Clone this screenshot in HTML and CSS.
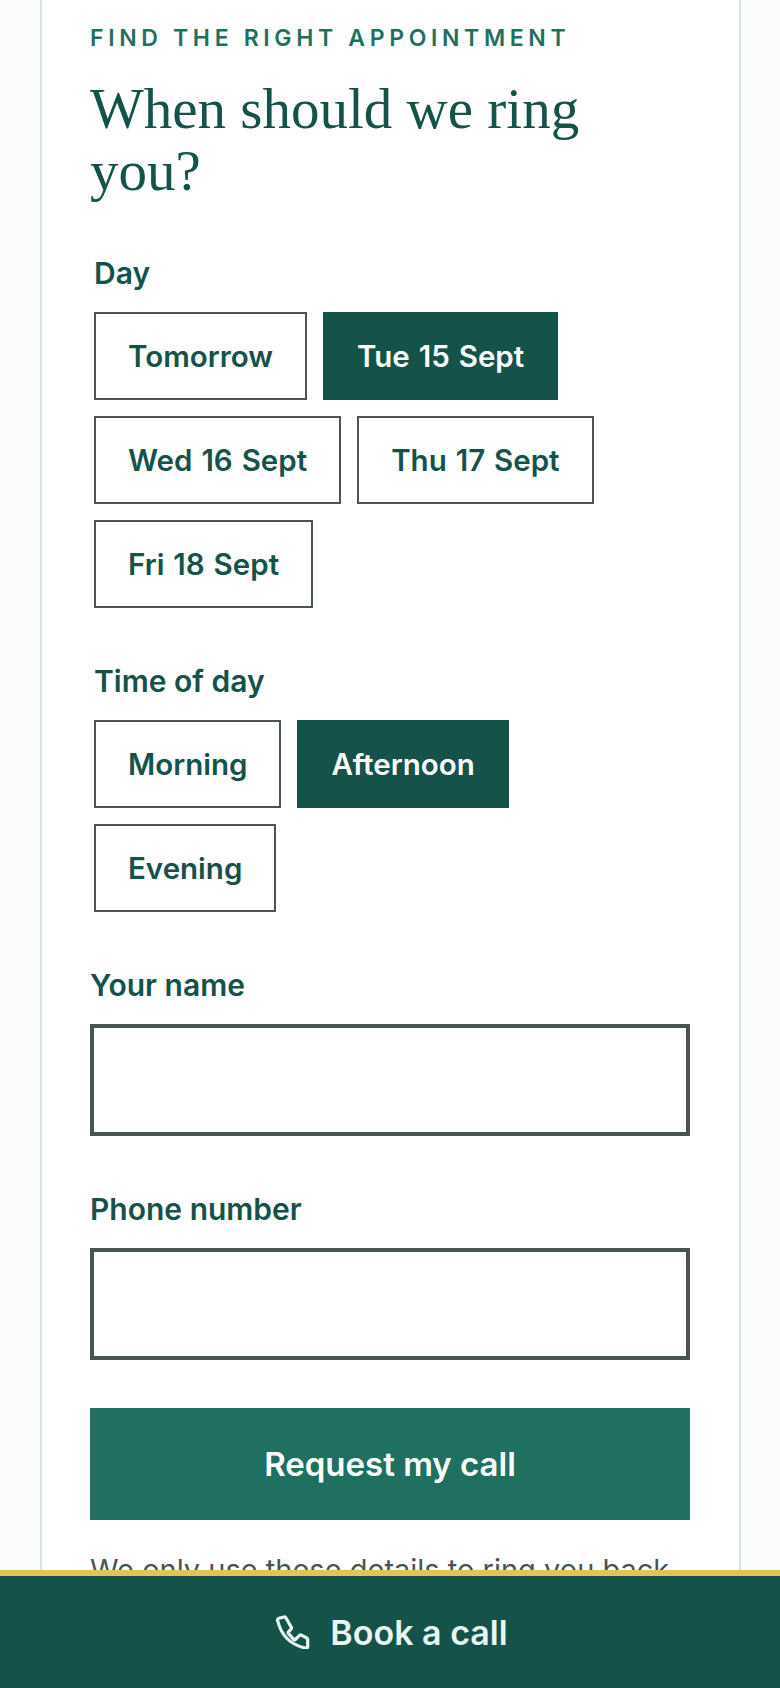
FILE: index.html
```html
<!DOCTYPE html>
<html lang="en">
<head>
    <meta charset="UTF-8">
    <meta name="viewport" content="width=device-width, initial-scale=1.0">
    <title>Book a call</title>
    <link rel="stylesheet" href="styles.css">
</head>
<body>
    <main class="card">
        <p class="eyebrow">FIND THE RIGHT APPOINTMENT</p>
        <h1 class="title">When should we ring you?</h1>

        <form>
            <div class="group">
                <div class="group-label">Day</div>
                <div class="options">
                    <button type="button" class="option">Tomorrow</button>
                    <button type="button" class="option active">Tue 15 Sept</button>
                    <button type="button" class="option">Wed 16 Sept</button>
                    <button type="button" class="option">Thu 17 Sept</button>
                    <button type="button" class="option">Fri 18 Sept</button>
                </div>
            </div>

            <div class="group">
                <div class="group-label">Time of day</div>
                <div class="options">
                    <button type="button" class="option">Morning</button>
                    <button type="button" class="option active">Afternoon</button>
                    <button type="button" class="option">Evening</button>
                </div>
            </div>

            <div class="field">
                <label for="name">Your name</label>
                <input type="text" id="name">
            </div>

            <div class="field">
                <label for="phone">Phone number</label>
                <input type="tel" id="phone">
            </div>

            <button type="button" class="submit">Request my call</button>
            <p class="note">We only use these details to ring you back.</p>
        </form>
    </main>

    <a class="book-bar" href="#">
        <svg class="phone-icon" viewBox="16 15 35 34" width="35" height="34" fill="none" stroke="currentColor" stroke-width="3.2" stroke-linejoin="round" stroke-linecap="round">
            <path d="M18.500 21c-.3-1.300.4-2.300 1.500-2.700l5-1.300c.8-.2 1.500.2 1.900.9l5.400 9.300c.4.7.3 1.400-.3 2l-2.500 2.600c-.5.500-.5 1 0 1.600l5.200 6c.5.600 1.100.600 1.600.1l4.300-4.100c.5-.5 1.100-.6 1.700-.3l5.400 2.900c.7.400 1 1 1 1.700v7c0 1-.9 1.700-2 1.400-14.500-3.100-24.700-12.800-28.200-28.100z"/>
        </svg>
        <span>Book a call</span>
    </a>
</body>
</html>
```

FILE: styles.css
```css
* {
    box-sizing: border-box;
}

html, body {
    height: 1688px;
    overflow: hidden;
}

body {
    margin: 0;
    background-color: #fafbfb;
    font-family: Inter, "Liberation Sans", sans-serif;
    color: #15524a;
}

.card {
    width: 701px;
    height: 1688px;
    margin-left: 40px;
    padding: 0 48px;
    background-color: #fff;
    border-left: 2px solid #d8e2e0;
    border-right: 2px solid #d8e2e0;
}

.eyebrow {
    margin: 0;
    padding-top: 24px;
    font-size: 23px;
    line-height: 28px;
    font-weight: 600;
    letter-spacing: 4.65px;
    color: #1f7060;
}

.title {
    margin: 26px 0 0;
    max-width: 560px;
    font-family: "Liberation Serif", serif;
    font-size: 57px;
    line-height: 62px;
    font-weight: 400;
}

.group {
    margin: 0 4px 53px;
}

.title + form {
    margin-top: 51px;
}

.group-label {
    font-size: 30px;
    line-height: 40px;
    font-weight: 600;
    margin-bottom: 19px;
}

.options {
    display: flex;
    flex-wrap: wrap;
    gap: 16px;
}

.option {
    height: 88px;
    padding: 0 32px;
    background-color: #fff;
    border: 2px solid #4a5553;
    font-family: inherit;
    font-size: 29.5px;
    font-weight: 600;
    word-spacing: 1.5px;
    color: #15524a;
}

.option.active {
    background-color: #15524a;
    border-color: #15524a;
    color: #fff;
}

.field {
    margin-bottom: 53px;
}

.field + .field {
    margin-bottom: 48px;
}

.field label {
    display: block;
    font-size: 30px;
    line-height: 40px;
    font-weight: 600;
    margin-bottom: 19px;
}

.field input {
    display: block;
    width: 600px;
    height: 112px;
    background-color: #fff;
    border: 4px solid #4a5553;
    border-radius: 0;
}

.submit {
    display: block;
    width: 600px;
    height: 112px;
    background-color: #1f7060;
    border: none;
    font-family: inherit;
    font-size: 33px;
    font-weight: 600;
    color: #fff;
}

.note {
    margin: 30px 0 0;
    font-size: 29px;
    line-height: 40px;
    color: #4a5553;
}

.book-bar {
    position: fixed;
    left: 0;
    right: 0;
    bottom: 0;
    height: 118px;
    padding-left: 3px;
    display: flex;
    align-items: center;
    justify-content: center;
    gap: 20px;
    background-color: #15524a;
    border-top: 6px solid #e2c160;
    font-size: 34px;
    font-weight: 600;
    color: #e9f6f2;
    text-decoration: none;
}

.phone-icon {
    flex: none;
}
```
